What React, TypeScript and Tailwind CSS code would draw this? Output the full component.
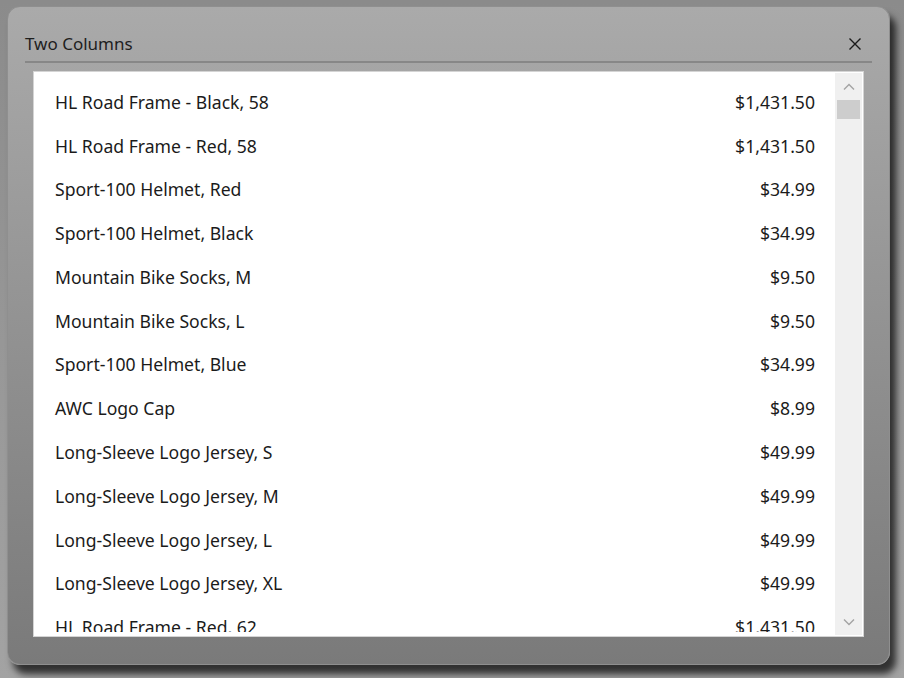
import React from 'react';

const items: [string, string][] = [
  ['HL Road Frame - Black, 58', '$1,431.50'],
  ['HL Road Frame - Red, 58', '$1,431.50'],
  ['Sport-100 Helmet, Red', '$34.99'],
  ['Sport-100 Helmet, Black', '$34.99'],
  ['Mountain Bike Socks, M', '$9.50'],
  ['Mountain Bike Socks, L', '$9.50'],
  ['Sport-100 Helmet, Blue', '$34.99'],
  ['AWC Logo Cap', '$8.99'],
  ['Long-Sleeve Logo Jersey, S', '$49.99'],
  ['Long-Sleeve Logo Jersey, M', '$49.99'],
  ['Long-Sleeve Logo Jersey, L', '$49.99'],
  ['Long-Sleeve Logo Jersey, XL', '$49.99'],
  ['HL Road Frame - Red, 62', '$1,431.50'],
];

export default function App() {
  return (
    <div className="w-[904px] h-[678px] overflow-hidden bg-gradient-to-b from-[#8b8b8b] to-[#a3a3a3] pt-[6px] pl-[7px] font-['Segoe_UI','Noto_Sans',sans-serif]">
      {/* Dialog */}
      <div className="w-[883px] h-[659px] rounded-[13px] border border-[#8f8f8f] bg-gradient-to-b from-[#aaaaaa] to-[#7a7a7a] shadow-[6px_9px_7px_rgba(0,0,0,0.7)] flex flex-col">
        {/* Title bar */}
        <div className="h-[56px] mx-[17px] flex items-end pb-[9px] justify-between border-b-2 border-[#878787]">
          <span className="text-[17px] text-[#1e1e1e] leading-none">Two Columns</span>
          <svg width="14" height="14" viewBox="0 0 14 14" className="mr-[10px] mb-[1px]">
            <path d="M1.5 1.5 L12.5 12.5 M12.5 1.5 L1.5 12.5" stroke="#1a1a1a" strokeWidth="1.4" />
          </svg>
        </div>

        {/* List box */}
        <div className="mt-[8px] mx-[25px] h-[566px] bg-white border border-[#d4d4d4] flex overflow-hidden">
          <div className="flex-1 mb-[4px] pt-[8px] pl-[21px] pr-[20px] overflow-hidden">
            {items.map(([name, price], i) => (
              <div key={i} className="h-[43.8px] flex items-center justify-between text-[17.6px] text-[#1b1b1b]">
                <span>{name}</span>
                <span>{price}</span>
              </div>
            ))}
          </div>
          {/* Scrollbar */}
          <div className="w-[27px] my-[1px] mr-[1px] bg-[#f0f0f0] flex flex-col items-center">
            <div className="h-[27px] w-full flex items-center justify-center">
              <svg width="12" height="8" viewBox="0 0 12 8">
                <path d="M1 6.5 L6 1.5 L11 6.5" stroke="#a3a3a3" strokeWidth="1.4" fill="none" />
              </svg>
            </div>
            <div className="w-[23px] h-[19px] bg-[#cdcdcd]" />
            <div className="flex-1" />
            <div className="h-[27px] w-full flex items-center justify-center">
              <svg width="12" height="8" viewBox="0 0 12 8">
                <path d="M1 1.5 L6 6.5 L11 1.5" stroke="#a3a3a3" strokeWidth="1.4" fill="none" />
              </svg>
            </div>
          </div>
        </div>
      </div>
    </div>
  );
}
